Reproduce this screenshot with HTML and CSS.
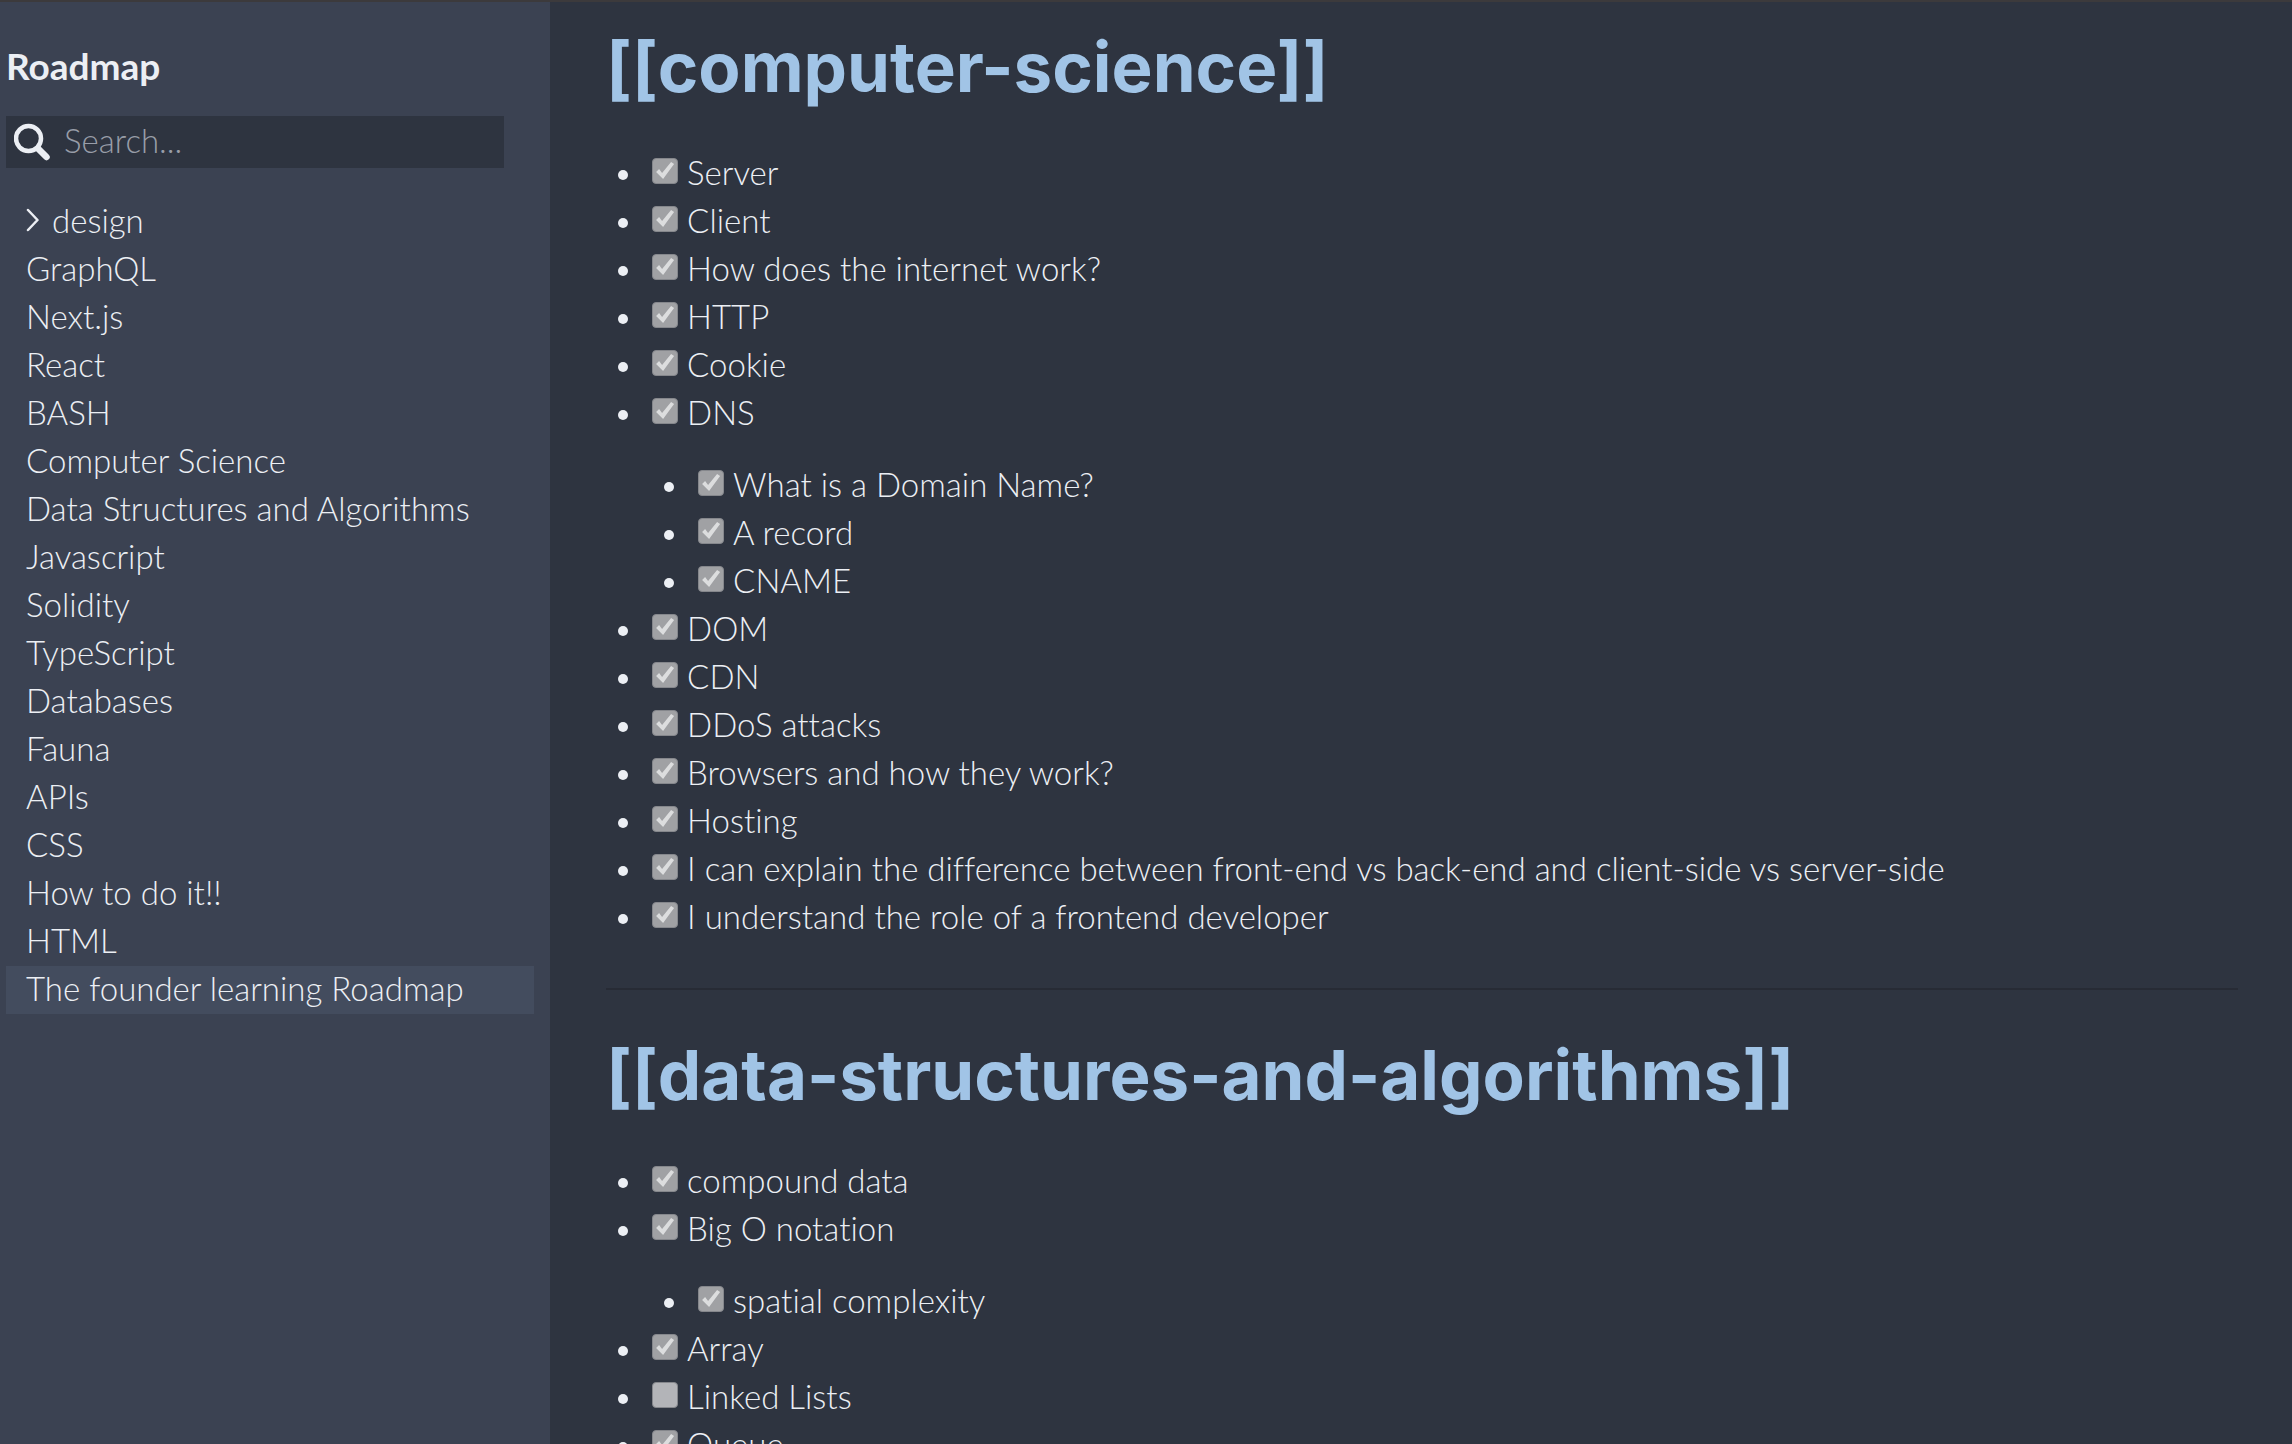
FILE: index.html
```
<!DOCTYPE html>
<html lang="en">
<head>
<meta charset="utf-8">
<title>Roadmap</title>
<link rel="stylesheet" href="styles.css">
</head>
<body>
<aside class="sidebar">
  <h2 class="brand">Roadmap</h2>
  <form class="search" role="search">
    <svg class="search-icon" viewBox="0 0 36 38" aria-hidden="true"><circle cx="14.500" cy="15.500" r="12.500" fill="none" stroke="currentColor" stroke-width="4.500"/><path d="M24 25.500 32.500 34" fill="none" stroke="currentColor" stroke-width="6.500" stroke-linecap="round"/></svg>
    <input class="search-input" type="search" placeholder="Search..." aria-label="Search">
  </form>
  <nav class="nav">
    <a class="nav-link" href="#"><svg class="chevron" viewBox="0 0 12 24" aria-hidden="true"><path d="M1.500 2 11 12 1.500 22" fill="none" stroke="currentColor" stroke-width="2.500" stroke-linecap="round" stroke-linejoin="round"/></svg>design</a>
    <a class="nav-link" href="#">GraphQL</a>
    <a class="nav-link" href="#">Next.js</a>
    <a class="nav-link" href="#">React</a>
    <a class="nav-link" href="#">BASH</a>
    <a class="nav-link" href="#">Computer Science</a>
    <a class="nav-link" href="#">Data Structures and Algorithms</a>
    <a class="nav-link" href="#">Javascript</a>
    <a class="nav-link" href="#">Solidity</a>
    <a class="nav-link" href="#">TypeScript</a>
    <a class="nav-link" href="#">Databases</a>
    <a class="nav-link" href="#">Fauna</a>
    <a class="nav-link" href="#">APIs</a>
    <a class="nav-link" href="#">CSS</a>
    <a class="nav-link" href="#">How to do it!!</a>
    <a class="nav-link" href="#">HTML</a>
    <a class="nav-link is-active" href="#" aria-current="page">The founder learning Roadmap</a>
  </nav>
</aside>
<main class="content">
  <h1 class="heading">[[computer-science]]</h1>
  <ul class="tasks">
    <li><label class="task"><input type="checkbox" checked disabled>Server</label></li>
    <li><label class="task"><input type="checkbox" checked disabled>Client</label></li>
    <li><label class="task"><input type="checkbox" checked disabled>How does the internet work?</label></li>
    <li><label class="task"><input type="checkbox" checked disabled>HTTP</label></li>
    <li><label class="task"><input type="checkbox" checked disabled>Cookie</label></li>
    <li><label class="task"><input type="checkbox" checked disabled>DNS</label>
      <ul class="tasks">
        <li><label class="task"><input type="checkbox" checked disabled>What is a Domain Name?</label></li>
        <li><label class="task"><input type="checkbox" checked disabled>A record</label></li>
        <li><label class="task"><input type="checkbox" checked disabled>CNAME</label></li>
      </ul>
    </li>
    <li><label class="task"><input type="checkbox" checked disabled>DOM</label></li>
    <li><label class="task"><input type="checkbox" checked disabled>CDN</label></li>
    <li><label class="task"><input type="checkbox" checked disabled>DDoS attacks</label></li>
    <li><label class="task"><input type="checkbox" checked disabled>Browsers and how they work?</label></li>
    <li><label class="task"><input type="checkbox" checked disabled>Hosting</label></li>
    <li><label class="task"><input type="checkbox" checked disabled>I can explain the difference between front-end vs back-end and client-side vs server-side</label></li>
    <li><label class="task"><input type="checkbox" checked disabled>I understand the role of a frontend developer</label></li>
  </ul>
  <hr class="rule">
  <h1 class="heading">[[data-structures-and-algorithms]]</h1>
  <ul class="tasks">
    <li><label class="task"><input type="checkbox" checked disabled>compound data</label></li>
    <li><label class="task"><input type="checkbox" checked disabled>Big O notation</label>
      <ul class="tasks">
        <li><label class="task"><input type="checkbox" checked disabled>spatial complexity</label></li>
      </ul>
    </li>
    <li><label class="task"><input type="checkbox" checked disabled>Array</label></li>
    <li><label class="task"><input type="checkbox" disabled>Linked Lists</label></li>
    <li><label class="task"><input type="checkbox" checked disabled>Queue</label></li>
  </ul>
</main>
</body>
</html>
```
FILE: styles.css
```
* {
  box-sizing: border-box;
}

body {
  display: flex;
  height: 100vh;
  margin: 0;
  overflow: hidden;
  border-top: 2px solid #3c3a3c;
  background: #2e3440;
  color: #eceff4;
  font: 300 33px/44px Lato, "Open Sans", sans-serif;
  font-variant-ligatures: none;
}

.sidebar {
  flex: 0 0 24%;
  padding: 42px 16px 0 6px;
  background: #3b4252;
}

.brand {
  margin: 0 0 28px;
  font-size: 37px;
  font-weight: 700;
}

.search {
  display: flex;
  align-items: center;
  height: 52px;
  margin: 0 30px 30px 0;
  padding: 0 8px;
  gap: 14px;
  background: #2e3440;
}

.search-icon {
  flex: none;
  width: 36px;
  height: 38px;
}

.search-input {
  flex: 1;
  min-width: 0;
  padding: 0 0 4px;
  border: 0;
  outline: 0;
  background: none;
  color: inherit;
  font: inherit;
}

.search-input::placeholder {
  color: #989da8;
  opacity: 1;
}

.nav-link {
  display: flex;
  align-items: center;
  padding: 0 20px 4px;
  color: inherit;
  text-decoration: none;
}

.nav-link.is-active {
  background: #434c5e;
}

.chevron {
  width: 13px;
  height: 24px;
  margin-right: 13px;
}

.content {
  flex: 1;
  min-width: 0;
  overflow: hidden;
  padding: 24px 54px 0 56px;
}

.heading {
  margin: 0 0 42px;
  color: #a1c4e6;
  font: 700 69px/82px Inter, "Open Sans", sans-serif;
}

.tasks {
  margin: 0;
  padding: 0;
  list-style: none;
}

.tasks .tasks {
  margin: 24px 0 0 46px;
}

.task {
  display: flex;
  align-items: center;
  padding: 0 0 4px 12px;
}

.task::before {
  content: "";
  width: 10px;
  height: 10px;
  margin: 6px 24px 0 0;
  border-radius: 50%;
  background: #eceff4;
}

.task input {
  appearance: none;
  width: 26px;
  height: 26px;
  margin: 0 9px 2px 0;
  border: 1px solid #85878c;
  border-radius: 4px;
  background: #b3b4b8;
}

.task input:checked {
  background: #a0a1a4;
}

.task input:checked::before {
  content: "";
  display: block;
  width: 24px;
  height: 24px;
  background: #dcddde;
  clip-path: polygon(3px 13px, 6px 10px, 9px 14px, 18px 3px, 21px 5px, 10px 20px);
}

.rule {
  height: 2px;
  margin: 46px 0 44px;
  border: 0;
  background: #272b35;
}
```
